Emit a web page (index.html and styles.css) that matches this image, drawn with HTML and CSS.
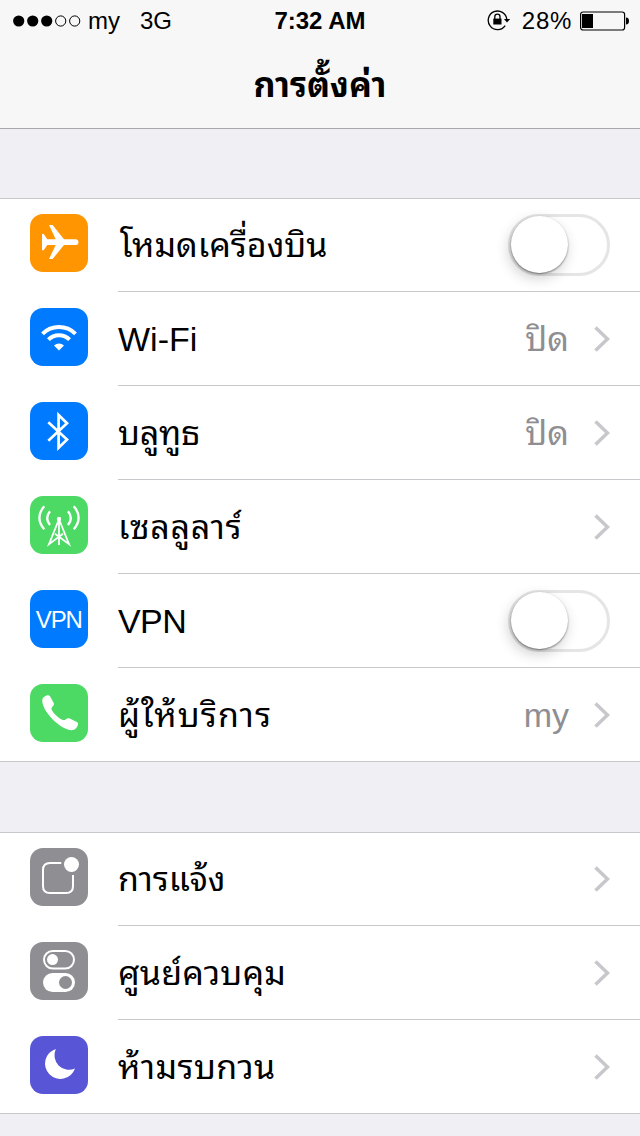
FILE: index.html
```
<!DOCTYPE html>
<html lang="th">
<head>
  <meta charset="UTF-8">
  <meta name="viewport" content="width=device-width, initial-scale=1.0">
  <title>การตั้งค่า</title>
  <link rel="stylesheet" href="styles.css">
</head>
<body>
  <header class="header">
    <div class="status-bar">
      <div class="status-left">
        <svg class="signal" width="68" height="12" viewBox="0 0 68 12">
          <circle cx="5.7" cy="6" r="5.6"/>
          <circle cx="19.7" cy="6" r="5.6"/>
          <circle cx="33.7" cy="6" r="5.6"/>
          <circle cx="47.7" cy="6" r="5.1" fill="none" stroke="#000"/>
          <circle cx="61.7" cy="6" r="5.1" fill="none" stroke="#000"/>
        </svg>
        <span class="carrier">my</span>
        <span class="network">3G</span>
      </div>
      <div class="status-time">7:32 AM</div>
      <div class="status-right">
        <svg class="lock" width="24" height="22" viewBox="0 0 24 22">
          <path d="M18.200 15.600A9.300 9.300 0 1 1 19.800 9.500" fill="none" stroke="#000" stroke-width="1.300"/>
          <path d="M16.900 9h6.300L20 12.400z"/>
          <path d="M6.300 8.600h8.200V14.500H6.300z"/>
          <path d="M7.800 9V6.800a2.600 2.600 0 0 1 5.200 0V9" fill="none" stroke="#000" stroke-width="1.300"/>
        </svg>
        <span class="percent">28%</span>
        <svg class="battery" width="50" height="20" viewBox="0 0 50 20">
          <rect x=".6" y="1" width="44" height="18" rx="2.5" fill="none" stroke="#000" stroke-width="1.2"/>
          <rect x="2" y="3" width="11" height="14"/>
          <path d="M46 6.5c2.200 0 3 1.500 3 3.500s-.8 3.500-3 3.500z"/>
        </svg>
      </div>
    </div>
    <h1 class="title">การตั้งค่า</h1>
  </header>

  <main>
    <ul class="group">
      <li class="row">
        <svg class="icon orange" viewBox="0 0 58 58">
          <path d="M12 20h1.700l3.600 5.300h8.400L19 11h3.600L34 25.300H46.200a2.900 2.900 0 0 1 0 5.700H34L22.600 45H19l6.700-14h-8.400l-3.600 5.200H12z"/>
        </svg>
        <div class="content">
          <span class="label thai airplane">โหมดเครื่องบิน</span>
          <span class="switch"></span>
        </div>
      </li>
      <li class="row">
        <svg class="icon blue" viewBox="0 0 58 58">
          <path class="line" stroke-width="4" d="M12.500 25.800a23.300 23.300 0 0 1 33 0M18.400 31.700a15 15 0 0 1 21.200 0"/>
          <path d="M29 42.500l-5-5a7.500 7.500 0 0 1 10 0z"/>
        </svg>
        <div class="content">
          <span class="label">Wi-Fi</span>
          <span class="value thai">ปิด</span>
          <svg class="chevron" viewBox="0 0 16 26"><path d="M1.500 1.500L13.500 13l-12 11.500"/></svg>
        </div>
      </li>
      <li class="row">
        <svg class="icon blue" viewBox="0 0 58 58">
          <path class="line" stroke-width="2.700" d="M18.300 20.200L37 37.600l-8.400 8.200V13L37 21.300 18.300 38.800"/>
        </svg>
        <div class="content">
          <span class="label thai bluetooth">บลูทูธ</span>
          <span class="value thai">ปิด</span>
          <svg class="chevron" viewBox="0 0 16 26"><path d="M1.500 1.500L13.500 13l-12 11.500"/></svg>
        </div>
      </li>
      <li class="row">
        <svg class="icon green" viewBox="0 0 58 58">
          <path class="line" stroke-width="2.400" d="M14.300 10.300c-6.500 7-6.500 16 0 23M20 15.300c-3.700 4.500-3.700 9.200 0 13.700M43.700 10.300c6.500 7 6.500 16 0 23M38 15.300c3.700 4.500 3.700 9.200 0 13.700"/>
          <circle cx="29" cy="23" r="2.200"/>
          <path class="line" stroke-width="1.800" d="M29 23v26M28.700 24l-9.700 24.200 14-10.500M29.300 24L39 48.200 25 37.700"/>
        </svg>
        <div class="content">
          <span class="label thai cellular">เซลลูลาร์</span>
          <svg class="chevron" viewBox="0 0 16 26"><path d="M1.500 1.500L13.500 13l-12 11.500"/></svg>
        </div>
      </li>
      <li class="row">
        <svg class="icon blue" viewBox="0 0 58 58">
          <text class="vpn-text" x="29.300" y="37.500" textLength="47">VPN</text>
        </svg>
        <div class="content">
          <span class="label vpn">VPN</span>
          <span class="switch"></span>
        </div>
      </li>
      <li class="row">
        <svg class="icon green" viewBox="0 0 58 58">
          <path d="M12.300 15.700c.4-2.300 3.500-4.700 6-4.500 1 .1 1.600.8 2 1.600l3.300 6c.6 1.200.5 2-.5 3.200-.9 1-2 1.900-1.500 3.400 1.700 4 7.500 9.400 11.700 10.700 1.400.4 2.300-.5 3.300-1.300 1.200-.8 2-.8 3.200-.3l7 3.500c1 .5 1.500 1.300 1.200 2.400-.6 2.700-2.800 5.300-5.200 5.700C31.500 47.300 11 26.500 12.300 15.700z"/>
        </svg>
        <div class="content">
          <span class="label thai provider">ผู้ให้บริการ</span>
          <span class="value">my</span>
          <svg class="chevron" viewBox="0 0 16 26"><path d="M1.500 1.500L13.500 13l-12 11.500"/></svg>
        </div>
      </li>
    </ul>

    <ul class="group">
      <li class="row">
        <svg class="icon gray" viewBox="0 0 58 58">
          <path class="line" stroke-width="2" d="M31.300 15H20q-7 0-7 7v16q0 7 7 7h16q7 0 7-7V27"/>
          <circle cx="41.500" cy="16.500" r="7.500"/>
        </svg>
        <div class="content">
          <span class="label thai">การแจ้ง</span>
          <svg class="chevron" viewBox="0 0 16 26"><path d="M1.500 1.500L13.500 13l-12 11.500"/></svg>
        </div>
      </li>
      <li class="row">
        <svg class="icon gray" viewBox="0 0 58 58">
          <rect class="line" x="14" y="9" width="30" height="17.500" rx="8.700" stroke-width="2"/>
          <circle cx="22.500" cy="17.600" r="5.500"/>
          <rect x="13" y="31" width="32" height="19" rx="9.500"/>
          <circle class="hole" cx="35.500" cy="40.500" r="6.500"/>
        </svg>
        <div class="content">
          <span class="label thai control">ศูนย์ควบคุม</span>
          <svg class="chevron" viewBox="0 0 16 26"><path d="M1.500 1.500L13.500 13l-12 11.500"/></svg>
        </div>
      </li>
      <li class="row">
        <svg class="icon purple" viewBox="0 0 58 58">
          <path d="M25.800 12.900A15.400 15.400 0 1 0 45 32.600 14.700 14.700 0 0 1 25.800 12.900z"/>
        </svg>
        <div class="content">
          <span class="label thai disturb">ห้ามรบกวน</span>
          <svg class="chevron" viewBox="0 0 16 26"><path d="M1.500 1.500L13.500 13l-12 11.500"/></svg>
        </div>
      </li>
    </ul>
  </main>
</body>
</html>
```
FILE: styles.css
```
* {
  box-sizing: border-box;
}
body {
  margin: 0;
  height: 1136px;
  overflow: hidden;
  background: #efeff4;
  color: #000;
  font-family: "Liberation Sans", "Noto Sans Thai Looped", Garuda, Waree, Loma, "Noto Sans Thai", sans-serif;
}
.header {
  height: 129px;
  background: #f7f7f7;
  border-bottom: 1px solid #a7a7ac;
}
.status-bar {
  display: grid;
  grid-template-columns: 1fr auto 1fr;
  align-items: center;
  height: 41px;
  padding: 0 10px 0 13px;
  font-size: 24px;
}
.status-left,
.status-right {
  display: flex;
  align-items: center;
}
.status-right {
  justify-content: flex-end;
}
.carrier {
  margin-left: 7px;
}
.network {
  margin-left: 20px;
}
.status-time {
  margin-right: 3px;
  font-weight: bold;
}
.percent {
  margin: 0 8px 0 11px;
  letter-spacing: 0.7px;
}
.title {
  margin: 0;
  line-height: 88px;
  text-align: center;
  font-size: 34px;
  font-weight: bold;
}
.group {
  margin: 69px 0 0;
  padding: 0;
  list-style: none;
  background: #fff;
  box-shadow: inset 0 1px #c8c7cc, inset 0 -1px #c8c7cc;
}
.group + .group {
  margin-top: 70px;
}
.row {
  display: flex;
  height: 94px;
  padding-left: 30px;
}
.icon {
  width: 58px;
  height: 58px;
  margin: 16px 30px 0 0;
  border-radius: 13px;
  fill: #fff;
}
.icon .line {
  fill: none;
  stroke: #fff;
}
.icon .hole {
  fill: #8e8e93;
}
.vpn-text {
  font-size: 24px;
  text-anchor: middle;
}
.orange { background: #ff9500; }
.blue { background: #007aff; }
.green { background: #4cd964; }
.gray { background: #8e8e93; }
.purple { background: #5856d6; }
.content {
  display: flex;
  flex: 1;
  align-items: center;
  padding-right: 30px;
  border-bottom: 1px solid #c8c7cc;
  font-size: 34px;
}
.label {
  flex: 1;
  padding-top: 2px;
  white-space: nowrap;
}
.value {
  padding-top: 2px;
  color: #8e8e93;
}
.thai {
  padding-top: 0;
  padding-bottom: 6px;
}
.airplane { padding-left: 2px; }
.bluetooth { letter-spacing: -0.2px; }
.cellular { letter-spacing: 0.7px; }
.vpn { letter-spacing: -0.6px; }
.provider { letter-spacing: 1.1px; }
.control { letter-spacing: 0.2px; }
.disturb { letter-spacing: 0.4px; }
.chevron {
  width: 16px;
  height: 26px;
  margin-left: 25px;
  fill: none;
  stroke: #c7c7cc;
  stroke-width: 3.5;
}
.switch {
  width: 102px;
  height: 62px;
  border: 3px solid #e5e5e5;
  border-radius: 31px;
}
.switch::before {
  content: "";
  display: block;
  width: 56.5px;
  height: 56.5px;
  margin-top: -0.5px;
  border-radius: 50%;
  background: #fff;
  box-shadow: 0 1px 2px rgba(0,0,0,0.45), -2px 5px 14px rgba(0,0,0,0.2);
}
```
